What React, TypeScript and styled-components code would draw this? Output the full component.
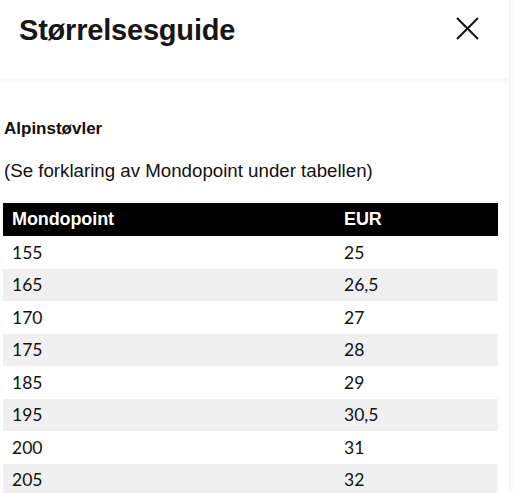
import styled, { createGlobalStyle } from "styled-components";

const GlobalStyle = createGlobalStyle`
  html, body {
    margin: 0;
    padding: 0;
    background: #fbfbfb;
  }
  body {
    font-family: "Liberation Sans", Arial, sans-serif;
    color: #111;
  }
`;

const Panel = styled.div`
  width: 509px;
  min-height: 493px;
  background: #fff;
  border-right: 1px solid #f1f1f1;
  overflow: hidden;
`;

const Header = styled.header`
  height: 78px;
  display: flex;
  align-items: flex-start;
  justify-content: space-between;
  padding: 0 30px 0 19px;
  box-sizing: border-box;
  box-shadow: 0 2px 5px rgba(0, 0, 0, 0.06);
  position: relative;
`;

const Title = styled.h1`
  margin: 14px 0 0;
  font-size: 29px;
  font-weight: 700;
  letter-spacing: -0.2px;
  color: #161616;
`;

const CloseButton = styled.button`
  margin-top: 16px;
  padding: 0;
  width: 24px;
  height: 24px;
  border: none;
  background: none;
  cursor: pointer;
  display: flex;
  align-items: center;
  justify-content: center;
`;

const Body = styled.div`
  padding: 41px 11px 0 3px;
`;

const Subtitle = styled.h2`
  margin: 0 0 0 1px;
  font-size: 17px;
  font-weight: 700;
  line-height: 20px;
  color: #111;
`;

const Note = styled.p`
  margin: 21px 0 0 1px;
  font-size: 18.7px;
  line-height: 22px;
  color: #111;
`;

const Table = styled.table`
  margin-top: 21px;
  width: 100%;
  border-collapse: collapse;
`;

const HeadCell = styled.th`
  background: #000;
  color: #fff;
  text-align: left;
  font-size: 18px;
  font-weight: 700;
  letter-spacing: -0.1px;
  height: 33px;
  padding: 0 9px;
  &:first-child {
    width: 314px;
  }
`;

const Row = styled.tr<{ $shaded: boolean }>`
  background: ${(p) => (p.$shaded ? "#f0f0f0" : "#fff")};
`;

const Cell = styled.td`
  height: 32.5px;
  padding: 0 9px;
  font-family: "Lato", "Liberation Sans", sans-serif;
  font-size: 17.5px;
  color: #111;
`;

const sizes: [string, string][] = [
  ["155", "25"],
  ["165", "26,5"],
  ["170", "27"],
  ["175", "28"],
  ["185", "29"],
  ["195", "30,5"],
  ["200", "31"],
  ["205", "32"],
];

export default function App() {
  return (
    <>
      <GlobalStyle />
      <Panel>
        <Header>
          <Title>Størrelsesguide</Title>
          <CloseButton aria-label="Lukk">
            <svg width="23" height="23" viewBox="0 0 23 23" fill="none">
              <path d="M1 1L22 22M22 1L1 22" stroke="#111" strokeWidth="2" />
            </svg>
          </CloseButton>
        </Header>
        <Body>
          <Subtitle>Alpinstøvler</Subtitle>
          <Note>(Se forklaring av Mondopoint under tabellen)</Note>
          <Table>
            <thead>
              <tr>
                <HeadCell>Mondopoint</HeadCell>
                <HeadCell>EUR</HeadCell>
              </tr>
            </thead>
            <tbody>
              {sizes.map(([mondo, eur], i) => (
                <Row key={mondo} $shaded={i % 2 === 1}>
                  <Cell>{mondo}</Cell>
                  <Cell>{eur}</Cell>
                </Row>
              ))}
            </tbody>
          </Table>
        </Body>
      </Panel>
    </>
  );
}
